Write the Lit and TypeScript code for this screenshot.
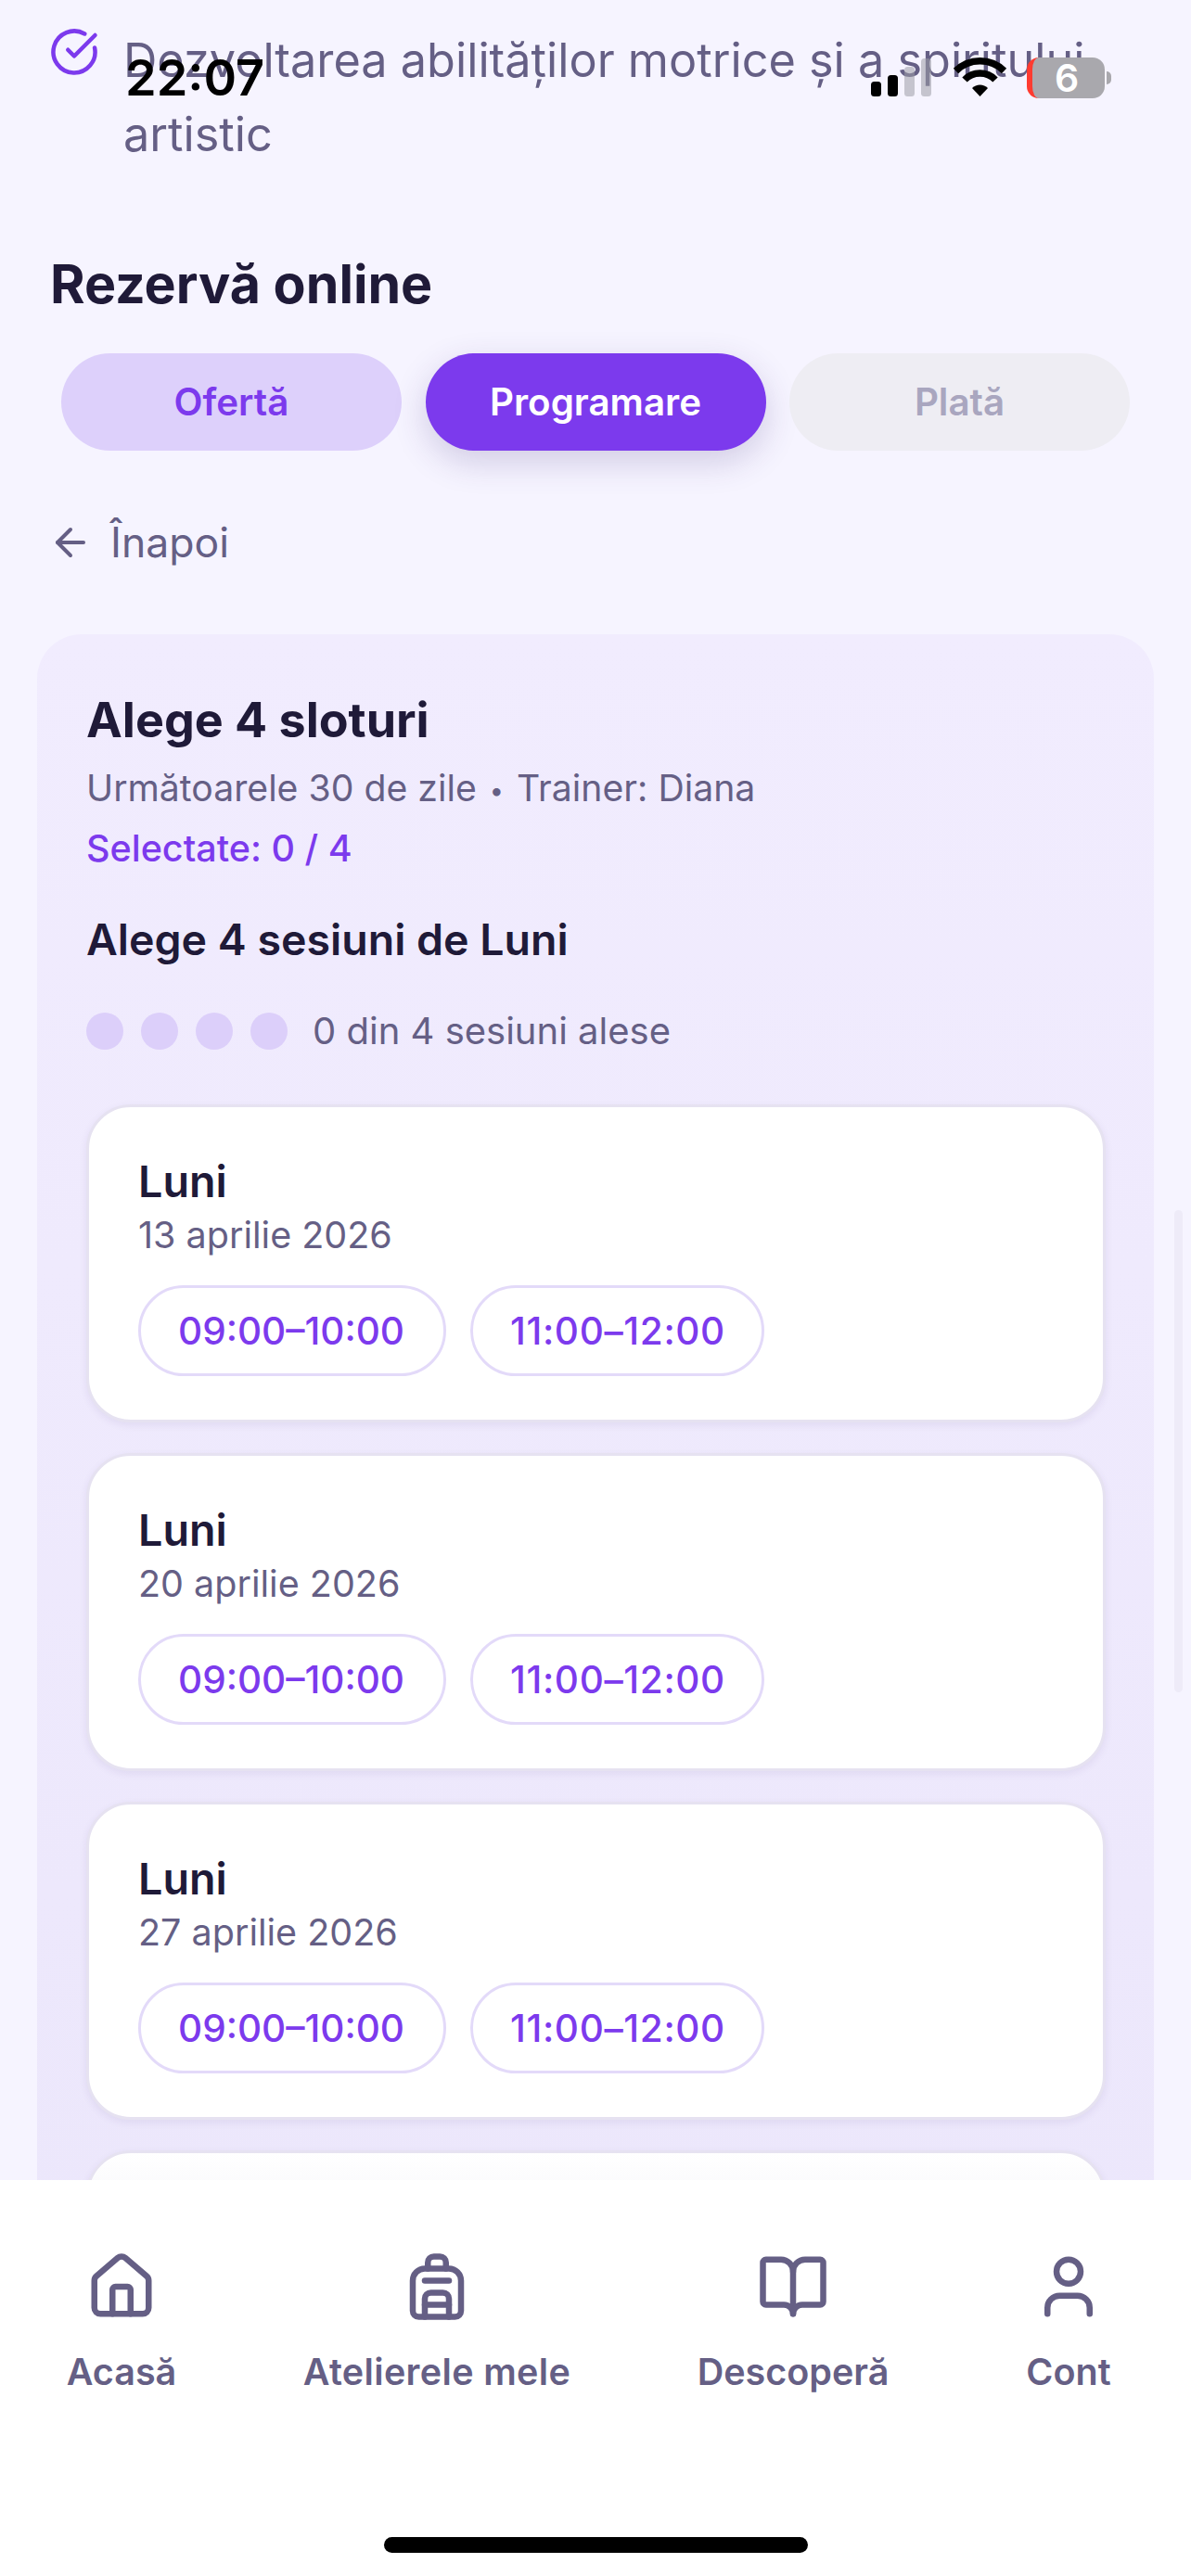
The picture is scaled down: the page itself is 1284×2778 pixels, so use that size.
import { LitElement, html, css, svg } from 'lit';
import { customElement } from 'lit/decorators.js';

const icon = (size: number, body: unknown) => html`<svg
  class="icon"
  width=${size}
  height=${size}
  viewBox="0 0 24 24"
  fill="none"
  stroke="currentColor"
  stroke-width="2"
  stroke-linecap="round"
  stroke-linejoin="round"
>
  ${body}
</svg>`;

const house = svg`<path d="M15 21v-8a1 1 0 0 0-1-1h-4a1 1 0 0 0-1 1v8" /><path d="M3 10a2 2 0 0 1 .709-1.528l7-6a2 2 0 0 1 2.582 0l7 6A2 2 0 0 1 21 10v9a2 2 0 0 1-2 2H5a2 2 0 0 1-2-2z" />`;
const backpack = svg`<path d="M4 10a4 4 0 0 1 4-4h8a4 4 0 0 1 4 4v10a2 2 0 0 1-2 2H6a2 2 0 0 1-2-2z" /><path d="M8 10h8" /><path d="M8 18h8" /><path d="M8 22v-6a2 2 0 0 1 2-2h4a2 2 0 0 1 2 2v6" /><path d="M9 6V4a2 2 0 0 1 2-2h2a2 2 0 0 1 2 2v2" />`;
const book = svg`<path d="M12 7v14" /><path d="M3 18a1 1 0 0 1-1-1V4a1 1 0 0 1 1-1h5a4 4 0 0 1 4 4 4 4 0 0 1 4-4h5a1 1 0 0 1 1 1v13a1 1 0 0 1-1 1h-6a3 3 0 0 0-3 3 3 3 0 0 0-3-3z" />`;
const user = svg`<path d="M19 21v-2a4 4 0 0 0-4-4H9a4 4 0 0 0-4 4v2" /><circle cx="12" cy="7" r="4" />`;
const check = svg`<path d="M21.801 10A10 10 0 1 1 17 3.335" /><path d="m9 11 3 3L22 4" />`;
const arrow = svg`<path d="m12 19-7-7 7-7" /><path d="M19 12H5" />`;

const dates = ['13 aprilie 2026', '20 aprilie 2026', '27 aprilie 2026'];
const slots = ['09:00–10:00', '11:00–12:00'];
const nav = [
  { label: 'Acasă', icon: house },
  { label: 'Atelierele mele', icon: backpack },
  { label: 'Descoperă', icon: book },
  { label: 'Cont', icon: user },
];

@customElement('app-root')
export class AppRoot extends LitElement {
  static override styles = css`
    :host {
      display: block;
      position: relative;
      width: 1284px;
      height: 2778px;
      overflow: hidden;
      background: #f6f4ff;
      font-family: Inter, 'Liberation Sans', sans-serif;
      color: #1f1a38;
    }
    .feature {
      display: flex;
      gap: 26px;
      padding: 25px 54px 0 53px;
      font-size: 50.4px;
      line-height: 80px;
      color: #655f85;
    }
    .feature .icon {
      flex: none;
      margin-top: 4px;
      color: #7c3aed;
    }
    h1 {
      margin: 85px 0 0 54px;
      font-size: 57.3px;
      line-height: 72px;
      font-weight: 700;
    }
    .tabs {
      display: grid;
      grid-template-columns: repeat(3, 367px);
      gap: 25.5px;
      margin: 39px 0 0 66px;
    }
    .tab {
      height: 105px;
      border-radius: 53px;
      display: flex;
      align-items: center;
      justify-content: center;
      font-size: 40.3px;
      font-weight: 600;
    }
    .tab.done {
      background: #ddd0fb;
      color: #7c3aed;
    }
    .tab.active {
      background: #7c3aed;
      color: #fff;
      box-shadow: 0 12px 36px rgba(60, 40, 120, 0.2);
    }
    .tab.todo {
      background: #eeedf3;
      color: #a9a6bf;
    }
    .back {
      display: flex;
      align-items: center;
      gap: 19px;
      margin: 69px 0 0 52px;
      font-size: 44.5px;
      line-height: 60px;
      color: #655f85;
    }
    .panel {
      margin: 69px 40px 0;
      padding: 60px 52px 60px 53px;
      border-radius: 48px;
      background: linear-gradient(180deg, #f1ecfe 0%, #ebe6fb 100%);
    }
    h2 {
      margin: 0;
      font-size: 52px;
      line-height: 66px;
      font-weight: 700;
    }
    .sub {
      margin-top: 10px;
      font-size: 39.2px;
      line-height: 60px;
      color: #655f85;
    }
    .bullet {
      font-size: 27px;
      vertical-align: 2px;
      padding: 0 3px;
    }
    .selected {
      margin-top: 2px;
      font-size: 39.5px;
      line-height: 60px;
      font-weight: 500;
      color: #7c3aed;
    }
    h3 {
      margin: 38px 0 0;
      font-size: 46.5px;
      line-height: 60px;
      font-weight: 600;
    }
    .progress {
      display: flex;
      align-items: center;
      gap: 19px;
      margin-top: 39px;
      font-size: 40px;
      line-height: 60px;
      color: #655f85;
    }
    .dot {
      width: 40px;
      height: 40px;
      border-radius: 50%;
      background: #dccffa;
    }
    .progress span {
      margin-left: 8px;
    }
    .cards {
      display: flex;
      flex-direction: column;
      gap: 33px;
      margin-top: 49px;
    }
    .card {
      height: 343px;
      box-sizing: border-box;
      padding: 50px 53px;
      border: 3px solid #e6e2f1;
      border-radius: 48px;
      background: #fff;
      box-shadow: 0 3px 9px rgba(60, 40, 120, 0.08);
    }
    .card:last-child {
      background: linear-gradient(180deg, #fff 0, #fafafc 40px);
    }
    .day {
      font-size: 46.7px;
      line-height: 60px;
      font-weight: 600;
    }
    .date {
      font-size: 39.5px;
      line-height: 54px;
      margin-top: 1px;
      color: #655f85;
    }
    .chips {
      display: flex;
      gap: 26px;
      margin-top: 27px;
    }
    .chip {
      height: 98px;
      box-sizing: border-box;
      padding: 0 42px 0 40px;
      display: flex;
      align-items: center;
      border: 3px solid #e3daf9;
      border-radius: 49px;
      font-size: 40.5px;
      font-weight: 500;
      color: #7c3aed;
    }
    .chip:nth-child(2) {
      padding: 0 39px 0 40px;
      letter-spacing: 0.65px;
    }
    .scrollbar {
      position: absolute;
      left: 1266px;
      top: 1305px;
      width: 9px;
      height: 520px;
      border-radius: 5px;
      background: #eeebf8;
    }
    .nav {
      position: absolute;
      left: 0;
      right: 0;
      top: 2351px;
      bottom: 0;
      display: grid;
      grid-template-columns: 262px 418px 350px 244px;
      align-content: start;
      padding-top: 76px;
      background: #fff;
    }
    .nav-item {
      display: flex;
      flex-direction: column;
      align-items: center;
      gap: 26px;
      font-size: 39.5px;
      line-height: 54px;
      font-weight: 600;
      color: #655f85;
      white-space: nowrap;
    }
    .nav-item:nth-child(2) span {
      letter-spacing: 0.35px;
    }
    .home-bar {
      position: absolute;
      left: 414px;
      top: 2736px;
      width: 457px;
      height: 17px;
      border-radius: 9px;
      background: #000;
    }
    .status {
      position: absolute;
      left: 0;
      top: 0;
      width: 100%;
      height: 120px;
    }
    .time {
      position: absolute;
      left: 135px;
      top: 54px;
      font-size: 54px;
      line-height: 60px;
      font-weight: 600;
      color: #000;
    }
    .status svg {
      position: absolute;
      left: 930px;
      top: 55px;
    }
    .battery {
      position: absolute;
      left: 1107px;
      top: 62px;
      width: 84px;
      height: 44px;
      box-sizing: border-box;
      border-radius: 13px;
      border-left: 6px solid #ff3b30;
      background: #a9a8ad;
      color: #fff;
      font-size: 41px;
      line-height: 44px;
      font-weight: 600;
      text-align: center;
      padding-right: 4px;
    }
    .nub {
      position: absolute;
      left: 1193px;
      top: 77px;
      width: 5px;
      height: 14px;
      border-radius: 0 5px 5px 0;
      background: #a9a8ad;
    }
  `;

  override render() {
    return html`
      <div class="feature">
        ${icon(54, check)}
        <div>Dezvoltarea abilităților motrice și a spiritului artistic</div>
      </div>
      <h1>Rezervă online</h1>
      <div class="tabs">
        <div class="tab done">Ofertă</div>
        <div class="tab active">Programare</div>
        <div class="tab todo">Plată</div>
      </div>
      <div class="back">${icon(48, arrow)}<span>Înapoi</span></div>
      <section class="panel">
        <h2>Alege 4 sloturi</h2>
        <div class="sub">Următoarele 30 de zile <span class="bullet">•</span> Trainer: Diana</div>
        <div class="selected">Selectate: 0 / 4</div>
        <h3>Alege 4 sesiuni de Luni</h3>
        <div class="progress">
          <i class="dot"></i><i class="dot"></i><i class="dot"></i><i class="dot"></i>
          <span>0 din 4 sesiuni alese</span>
        </div>
        <div class="cards">
          ${dates.map(
            (d) => html`<div class="card">
              <div class="day">Luni</div>
              <div class="date">${d}</div>
              <div class="chips">${slots.map((s) => html`<div class="chip">${s}</div>`)}</div>
            </div>`
          )}
          <div class="card"></div>
        </div>
      </section>
      <div class="scrollbar"></div>
      <nav class="nav">
        ${nav.map((n) => html`<div class="nav-item">${icon(78, n.icon)}<span>${n.label}</span></div>`)}
      </nav>
      <div class="home-bar"></div>
      <div class="status">
        <div class="time">22:07</div>
        <svg width="160" height="60" viewBox="0 0 160 60">
          <rect x="9" y="33" width="11" height="16" rx="3.5" fill="#000" />
          <rect x="27" y="26" width="11" height="23" rx="3.5" fill="#000" />
          <rect x="45" y="17" width="11" height="32" rx="3.5" fill="#9d9ca6" fill-opacity="0.55" />
          <rect x="63" y="8" width="11" height="41" rx="3.5" fill="#9d9ca6" fill-opacity="0.55" />
          <g fill="none" stroke="#000" stroke-width="7.5">
            <path d="M100.5 21.5a37 37 0 0 1 52 0" />
            <path d="M110 31a23 23 0 0 1 33 0" />
          </g>
          <path d="M118 40a12 12 0 0 1 17 0l-8.500 9z" fill="#000" />
        </svg>
        <div class="battery">6</div>
        <div class="nub"></div>
      </div>
    `;
  }
}

declare global {
  interface HTMLElementTagNameMap {
    'app-root': AppRoot;
  }
}
